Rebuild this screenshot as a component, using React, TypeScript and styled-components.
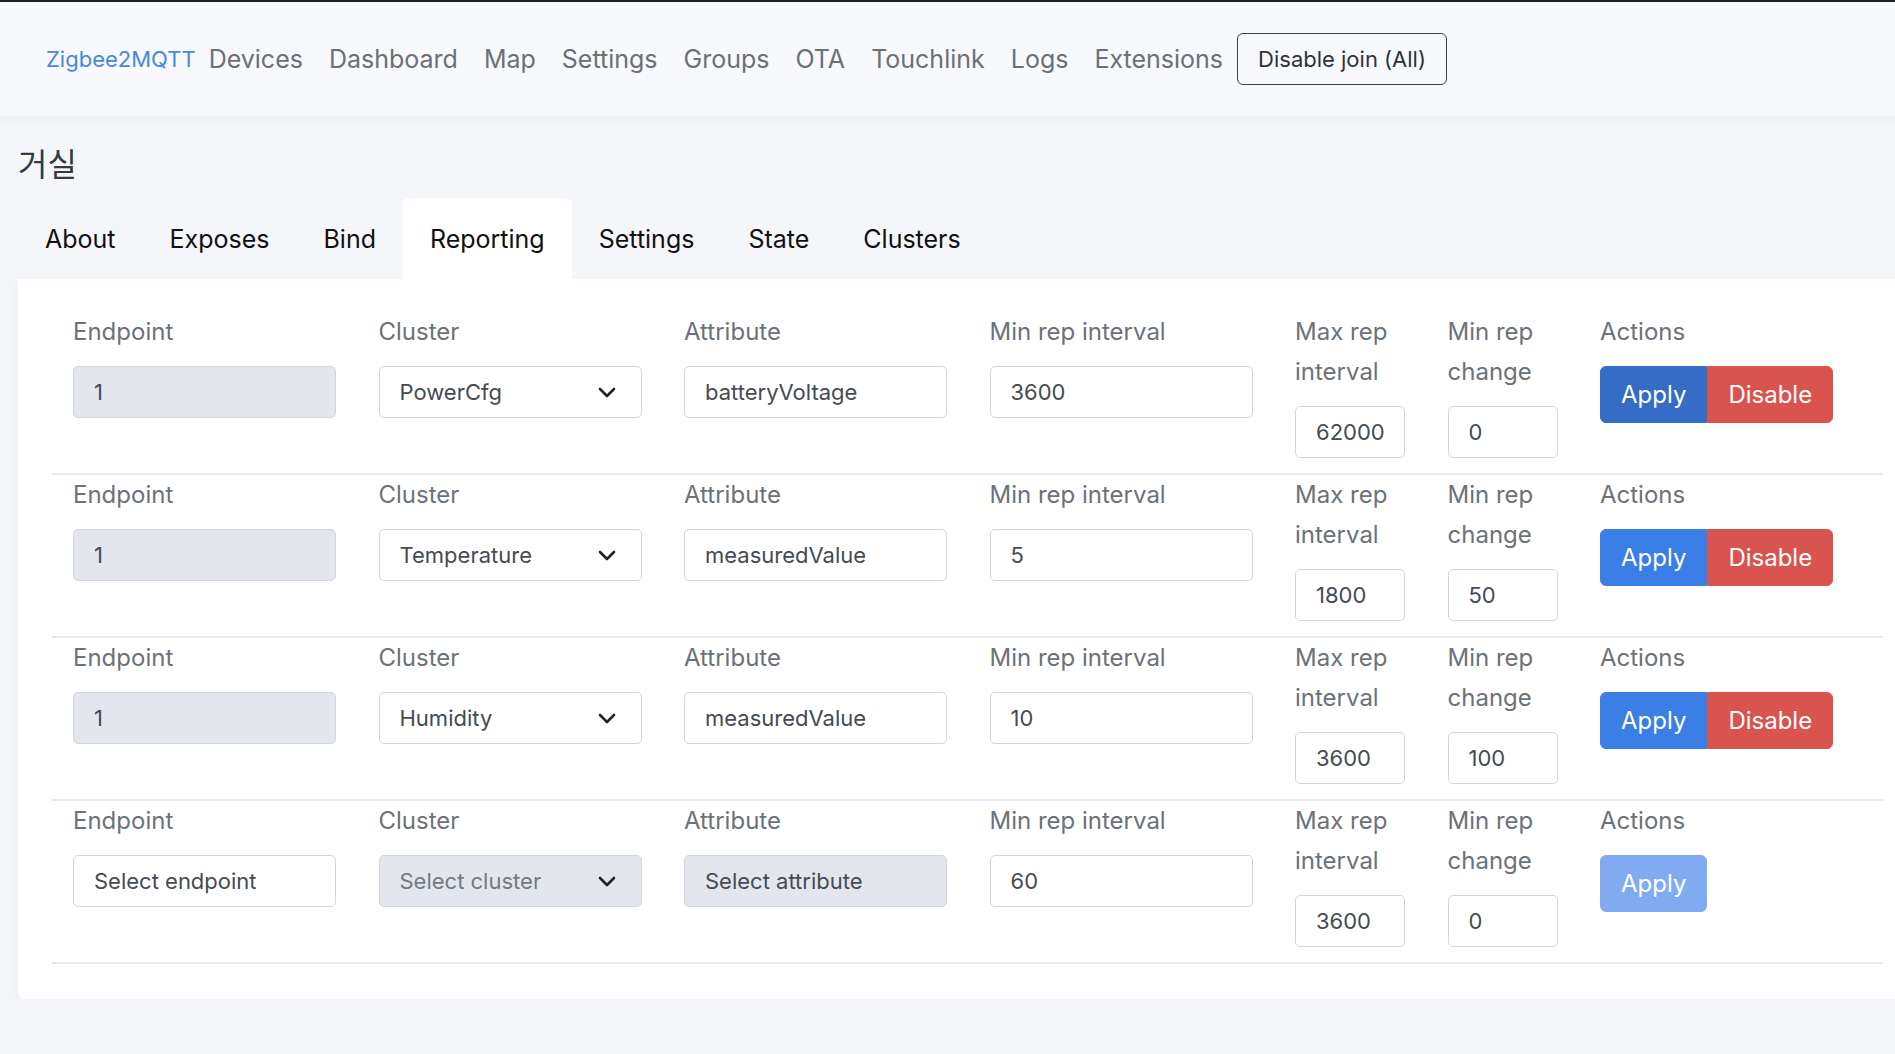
import * as React from "react"
import styled, { createGlobalStyle } from "styled-components"

const GlobalStyle = createGlobalStyle`
  html, body {
    margin: 0;
    padding: 0;
    background: #f5f6f9;
    font-family: Inter, "Noto Sans", "Noto Sans CJK KR", sans-serif;
    overflow: hidden;
  }
  * {
    box-sizing: border-box;
  }
`

interface ReportingRow {
  endpoint: string
  cluster: string
  attribute: string
  minInterval: string
  maxInterval: string
  minChange: string
  isNew?: boolean
}

const rows: ReportingRow[] = [
  { endpoint: "1", cluster: "PowerCfg", attribute: "batteryVoltage", minInterval: "3600", maxInterval: "62000", minChange: "0" },
  { endpoint: "1", cluster: "Temperature", attribute: "measuredValue", minInterval: "5", maxInterval: "1800", minChange: "50" },
  { endpoint: "1", cluster: "Humidity", attribute: "measuredValue", minInterval: "10", maxInterval: "3600", minChange: "100" },
  { endpoint: "Select endpoint", cluster: "Select cluster", attribute: "Select attribute", minInterval: "60", maxInterval: "3600", minChange: "0", isNew: true },
]

const navLinks = ["Devices", "Dashboard", "Map", "Settings", "Groups", "OTA", "Touchlink", "Logs", "Extensions"]
const tabs = ["About", "Exposes", "Bind", "Reporting", "Settings", "State", "Clusters"]

const Chevron: React.FunctionComponent = () => (
  <svg width="18" height="11" viewBox="0 0 18 11" fill="none">
    <path d="M2 2l7 7 7-7" stroke="#1f2327" strokeWidth="2.6" strokeLinecap="round" strokeLinejoin="round" />
  </svg>
)

const App: React.FunctionComponent = () => {
  return (
    <>
      <GlobalStyle />
      <Navbar>
        <Brand>Zigbee2MQTT</Brand>
        {navLinks.map(l => (
          <NavLink key={l}>{l}</NavLink>
        ))}
        <OutlineButton>Disable join (All)</OutlineButton>
      </Navbar>
      <Page>
        <Title>거실</Title>
        <Tabs>
          {tabs.map(t => (
            <Tab key={t} active={t === "Reporting"}>{t}</Tab>
          ))}
        </Tabs>
        <Card>
          {rows.map((r, i) => (
            <Row key={i}>
              <Field width={263}>
                <Label>Endpoint</Label>
                <Input readOnly value={r.endpoint} disabledLook={!r.isNew} />
              </Field>
              <Field width={263}>
                <Label>Cluster</Label>
                <SelectBox disabledLook={r.isNew}>
                  <SelectText muted={r.isNew}>{r.cluster}</SelectText>
                  <Chevron />
                </SelectBox>
              </Field>
              <Field width={263}>
                <Label>Attribute</Label>
                <Input readOnly value={r.attribute} disabledLook={r.isNew} />
              </Field>
              <Field width={263}>
                <Label>Min rep interval</Label>
                <Input readOnly value={r.minInterval} />
              </Field>
              <Field width={110}>
                <Label>Max rep interval</Label>
                <Input readOnly value={r.maxInterval} />
              </Field>
              <Field width={110}>
                <Label>Min rep change</Label>
                <Input readOnly value={r.minChange} />
              </Field>
              <Field>
                <Label>Actions</Label>
                <ButtonGroup>
                  <ActionButton variant={r.isNew ? "disabled" : i === 0 ? "focused" : "primary"} alone={r.isNew}>
                    Apply
                  </ActionButton>
                  {!r.isNew && <ActionButton variant="danger">Disable</ActionButton>}
                </ButtonGroup>
              </Field>
            </Row>
          ))}
        </Card>
      </Page>
    </>
  )
}

const Navbar = styled.nav`
  display: flex;
  align-items: center;
  height: 116px;
  padding-left: 46px;
  background: #f8f9fc;
  border-top: 2px solid #1b2127;
  box-shadow: 0 3px 10px rgba(30, 40, 60, 0.05);
`

const Brand = styled.span`
  font-size: 22px;
  color: #4a87dd;
`

const NavLink = styled.span`
  font-size: 25px;
  color: #6c7075;
  padding: 0 13px;
`

const OutlineButton = styled.button`
  height: 52px;
  margin-left: 1px;
  padding: 0 20px;
  font-family: inherit;
  font-size: 22px;
  color: #2f3338;
  background: transparent;
  border: 1.5px solid #3a3f45;
  border-radius: 6px;
`

const Page = styled.main`
  padding-left: 18px;
`

const Title = styled.h2`
  margin: 30px 0 14px;
  font-size: 32px;
  font-weight: 400;
  line-height: 38px;
  color: #343a40;
`

const Tabs = styled.div`
  display: flex;
`

const Tab = styled.div<{ active?: boolean }>`
  height: 81px;
  display: flex;
  align-items: center;
  padding: 0 27px;
  font-size: 25px;
  color: #111;
  background: ${p => (p.active ? "#fff" : "transparent")};
  border-radius: 6px 6px 0 0;
`

const Card = styled.section`
  margin-right: -40px;
  padding: 33px 52px 35px 34px;
  background: #fff;
  border-radius: 0 0 6px 6px;
  box-shadow: 0 2px 6px rgba(30, 40, 60, 0.05);
`

const Row = styled.div`
  display: flex;
  align-items: flex-start;
  gap: 42.5px;
  padding: 0 0 15px 21px;
  border-bottom: 2px solid #e6e9ee;
`

const Field = styled.div<{ width?: number }>`
  display: flex;
  flex-direction: column;
  width: ${p => (p.width ? `${p.width}px` : "auto")};
  flex: none;
`

const Label = styled.label`
  font-size: 24px;
  line-height: 40px;
  color: #6c7278;
  margin-bottom: 14px;
`

const Input = styled.input<{ disabledLook?: boolean }>`
  width: 100%;
  height: 52px;
  padding: 0 18px 0 20px;
  font-family: inherit;
  font-size: 22px;
  color: #464b51;
  background: ${p => (p.disabledLook ? "#e3e7ed" : "#fff")};
  border: 1.5px solid #d3d7dc;
  border-radius: 5px;
  outline: none;
`

const SelectBox = styled.div<{ disabledLook?: boolean }>`
  display: flex;
  align-items: center;
  justify-content: space-between;
  height: 52px;
  padding: 0 25px 0 20px;
  background: ${p => (p.disabledLook ? "#e3e7ed" : "#fff")};
  border: 1.5px solid #d3d7dc;
  border-radius: 5px;
`

const SelectText = styled.span<{ muted?: boolean }>`
  font-size: 22px;
  color: ${p => (p.muted ? "#737a81" : "#464b51")};
`

const ButtonGroup = styled.div`
  display: flex;
`

const buttonColors = {
  primary: "#3b7ee5",
  focused: "#346cc6",
  danger: "#d9534f",
  disabled: "#80abf1",
}

const ActionButton = styled.button<{ variant: keyof typeof buttonColors; alone?: boolean }>`
  height: 57px;
  padding: 0 20px;
  font-family: inherit;
  font-size: 24px;
  color: #fff;
  background: ${p => buttonColors[p.variant]};
  border: 1px solid ${p => buttonColors[p.variant]};
  border-radius: 0;

  &:first-child {
    border-radius: ${p => (p.alone ? "6px" : "6px 0 0 6px")};
  }

  &:last-child:not(:first-child) {
    border-radius: 0 6px 6px 0;
  }
`

export default App
